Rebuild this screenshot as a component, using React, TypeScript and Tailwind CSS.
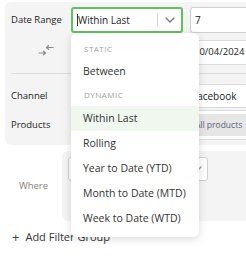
import React from 'react';

// Filter builder with the date range select open
const staticOptions = ['Between'];
const dynamicOptions = ['Within Last', 'Rolling', 'Year to Date (YTD)', 'Month to Date (MTD)', 'Week to Date (WTD)'];

const Chevron = ({ className }: { className?: string }) => (
    <svg className={className} width="10" height="6" viewBox="0 0 10 6" fill="none">
        <path d="M1 1l4 4 4-4" stroke="currentColor" strokeWidth="1.3" strokeLinecap="round" strokeLinejoin="round" />
    </svg>
);

const SwapIcon = () => (
    <svg width="16" height="11" viewBox="0 0 16 11" fill="none" className="text-[#8a8a8a]">
        <path d="M15 2.5H8.5M8.5 2.5L10.5 0.7M8.5 2.5L10.5 4.3" stroke="currentColor" strokeWidth="1.2" strokeLinecap="round" strokeLinejoin="round" />
        <path d="M1 8H7.5M7.5 8L5.5 6.2M7.5 8L5.5 9.8" stroke="currentColor" strokeWidth="1.2" strokeLinecap="round" strokeLinejoin="round" />
    </svg>
);

const App: React.FC = () => {
    return (
        <div className="relative w-[246px] h-[260px] overflow-hidden bg-white font-['Open_Sans','Liberation_Sans',sans-serif] text-[11px] text-[#222]">
            <div className="pt-[2px] pl-[5px]">
                {/* main filters */}
                <div className="w-[320px] bg-[#f4f4f4] rounded-l-md pt-[5px] pb-[5px] pl-[6px]">
                    <div className="flex items-center h-[26px]">
                        <div className="w-[60px] shrink-0 text-[9.5px]">Date Range</div>
                        <div className="w-[112px] shrink-0 h-[26px] flex items-center border-2 border-[#62c15f] rounded-[3px] bg-white">
                            <div className="flex-1 pl-[4px] flex items-center text-[10px]">
                                <span className="w-px h-[12px] bg-[#333]" />
                                <span>Within Last</span>
                            </div>
                            <span className="w-px h-[14px] bg-[#d4d4d4]" />
                            <div className="w-[23px] flex justify-center text-[#777]">
                                <Chevron />
                            </div>
                        </div>
                        <div className="ml-[7px] w-[120px] shrink-0 h-[26px] flex items-center border border-[#cfcfcf] rounded-[3px] bg-white pl-[4px] text-[10px]">7</div>
                    </div>
                    <div className="flex items-start mt-[7px]">
                        <div className="w-[60px] shrink-0 flex justify-center pt-[5px] pl-[10px]">
                            <SwapIcon />
                        </div>
                        <div className="ml-[119px] w-[120px] shrink-0">
                            <div className="h-[25px] flex items-center border border-[#dcdcdc] rounded-[3px] bg-white pl-[3px] whitespace-nowrap overflow-hidden text-[9.5px]">10/04/2024 - 10/10/2024</div>
                        </div>
                    </div>
                    <div className="mt-[8px] h-px bg-[#dddddd]" />
                    <div className="flex items-center mt-[10px]">
                        <div className="w-[60px] shrink-0 text-[9.5px]">Channel</div>
                        <div className="ml-[119px] w-[120px] shrink-0 h-[24px] flex items-center border border-[#dcdcdc] rounded-[3px] bg-white pl-px text-[10px]">Facebook</div>
                    </div>
                    <div className="flex items-center mt-[2px]">
                        <div className="w-[60px] shrink-0 text-[9.5px]">Products</div>
                        <div className="ml-[119px] w-[120px] shrink-0 h-[30px] flex items-center border border-[#dcdcdc] rounded-[3px] bg-white pl-[2px]">
                            <span className="h-[22px] flex items-center gap-[4px] px-[2px] bg-[#e6e6e6] rounded-[2px] text-[8.5px] text-[#5b6478] whitespace-nowrap">
                                All products
                                <span className="text-[#999]">×</span>
                            </span>
                        </div>
                    </div>
                </div>

                {/* where group */}
                <div className="flex mt-[6px]">
                    <div className="w-[57px] shrink-0 flex items-center justify-center text-[9.5px] text-[#8a7f74]">Where</div>
                    <div className="w-[260px] shrink-0 h-[70px] bg-[#f4f4f4] rounded-l-md pt-[6px] pl-[6px]">
                        <div className="w-[140px] h-[24px] flex items-center justify-end pr-[5px] border border-[#cfcfcf] rounded-[3px] bg-white text-[#999]">
                            <Chevron />
                        </div>
                    </div>
                </div>

                <div className="flex items-center mt-[9px] ml-[7px] h-[14px] text-[#333]">
                    <span className="text-[13px] leading-none mr-[6px] text-[#444]">+</span>
                    <span>Add Filter Group</span>
                </div>
            </div>

            {/* open dropdown */}
            <div className="absolute left-[71px] top-[33px] w-[128px] bg-white rounded-md shadow-[0_2px_8px_rgba(0,0,0,0.15)] py-[6px] text-[10.5px]">
                <div className="h-[20px] flex items-center pl-[13px] text-[8px] tracking-[0.5px] text-[#a0a0a0]">STATIC</div>
                {staticOptions.map((o) => (
                    <div key={o} className="h-[25px] flex items-center pl-[12px] text-[#333]">{o}</div>
                ))}
                <div className="h-[22px] flex items-center pl-[13px] text-[8px] tracking-[0.5px] text-[#a0a0a0]">DYNAMIC</div>
                {dynamicOptions.map((o) => (
                    <div key={o} className={`h-[25px] flex items-center pl-[12px] text-[#333] ${o === 'Within Last' ? 'bg-[#eff7ee]' : ''}`}>{o}</div>
                ))}
            </div>
        </div>
    );
};

export default App;
